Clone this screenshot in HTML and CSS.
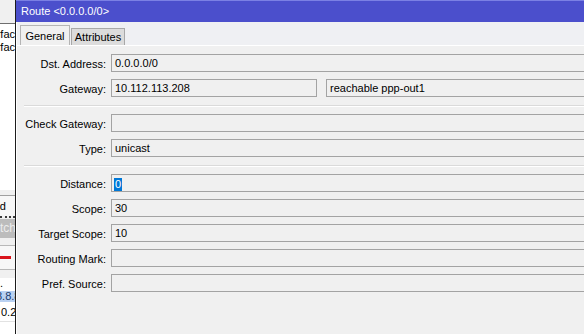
FILE: index.html
```html
<!DOCTYPE html>
<html>
<head>
<meta charset="utf-8">
<link rel="stylesheet" href="styles.css">
</head>
<body>
<div class="screen">
  <div class="bg-win">
    <div class="bw-top"></div>
    <div class="bw-list">
      <div class="bw-clip">Interfac</div>
      <div class="bw-clip">Interfac</div>
    </div>
    <div class="bw-gap"></div>
    <div class="bw-find"><span class="bw-clip bw-find-text">Find</span></div>
    <div class="bw-dash"></div>
    <div class="bw-graybtn">tch</div>
    <div class="bw-gap2"></div>
    <div class="bw-btn"><span class="bw-minus"></span></div>
    <div class="bw-gap3"></div>
    <div class="bw-head">.</div>
    <div class="bw-sel">8.8.8</div>
    <div class="bw-row">0.2</div>
    <div class="bw-rest"></div>
  </div>
  <div class="dialog">
    <div class="titlebar">Route &lt;0.0.0.0/0&gt;</div>
    <div class="tabs">
      <div class="tab active">General</div>
      <div class="tab">Attributes</div>
    </div>
    <div class="panel">
      <div class="row">
        <div class="label">Dst. Address:</div>
        <div class="field">0.0.0.0/0</div>
      </div>
      <div class="row">
        <div class="label">Gateway:</div>
        <div class="field gw">10.112.113.208</div>
        <div class="field">reachable ppp-out1</div>
      </div>
      <div class="sep"></div>
      <div class="row">
        <div class="label">Check Gateway:</div>
        <div class="field"></div>
      </div>
      <div class="row">
        <div class="label">Type:</div>
        <div class="field">unicast</div>
      </div>
      <div class="sep"></div>
      <div class="row">
        <div class="label">Distance:</div>
        <div class="field"><span class="selected">0</span></div>
      </div>
      <div class="row">
        <div class="label">Scope:</div>
        <div class="field">30</div>
      </div>
      <div class="row">
        <div class="label">Target Scope:</div>
        <div class="field">10</div>
      </div>
      <div class="row">
        <div class="label">Routing Mark:</div>
        <div class="field"></div>
      </div>
      <div class="row">
        <div class="label">Pref. Source:</div>
        <div class="field"></div>
      </div>
    </div>
  </div>
</div>
</body>
</html>
```

FILE: styles.css
```css
html, body {
  margin: 0;
  padding: 0;
}
body {
  width: 584px;
  height: 334px;
  overflow: hidden;
  font-family: "Liberation Sans", Arial, sans-serif;
  font-size: 11px;
  color: #000;
  background: #f0f0f0;
}
.screen {
  display: flex;
  height: 334px;
}

/* background window on the left */
.bg-win {
  width: 15px;
  flex: none;
  display: flex;
  flex-direction: column;
  overflow: hidden;
  background: #fff;
}
.bw-top {
  height: 23px;
  flex: none;
  background: #f0f0f0;
  border-bottom: 1px solid #6e6e6e;
}
.bw-list {
  height: 166px;
  flex: none;
  padding-top: 4px;
  box-sizing: border-box;
  background: #fff;
}
.bw-clip {
  display: flex;
  justify-content: flex-end;
  white-space: nowrap;
  overflow: hidden;
  line-height: 13px;
}
.bw-gap {
  height: 5px;
  flex: none;
  background: #f0f0f0;
  border-bottom: 1px solid #a0a0a0;
}
.bw-find {
  height: 20px;
  flex: none;
  background: #f7f7f7;
  display: flex;
  justify-content: flex-end;
  overflow: hidden;
}
.bw-find-text {
  line-height: 18px;
  padding-top: 1px;
  padding-right: 9px;
}
.bw-dash {
  height: 3px;
  flex: none;
  background: #f0f0f0;
  border-top: 2px dotted #3a3a3a;
  box-sizing: border-box;
}
.bw-graybtn {
  height: 19px;
  flex: none;
  background: #bcbcbc;
  color: #ececec;
  font-size: 12px;
  line-height: 19px;
  white-space: nowrap;
  overflow: hidden;
}
.bw-gap2 {
  height: 7px;
  flex: none;
  background: #f0f0f0;
}
.bw-btn {
  height: 23px;
  flex: none;
  background: #f7f7f7;
  border-top: 1px solid #b8b8b8;
  border-bottom: 1px solid #b8b8b8;
  display: flex;
  align-items: center;
}
.bw-minus {
  width: 11px;
  height: 3px;
  background: #d9141c;
}
.bw-gap3 {
  height: 8px;
  flex: none;
  background: #f0f0f0;
}
.bw-head {
  height: 12px;
  flex: none;
  background: #fff;
  line-height: 10px;
  border-bottom: 1px solid #fff;
}
.bw-sel {
  height: 11px;
  flex: none;
  background: #b9d1f2;
  color: #1a3a6a;
  line-height: 11px;
  white-space: nowrap;
  overflow: hidden;
  text-indent: -4px;
}
.bw-row {
  height: 19px;
  flex: none;
  line-height: 20px;
  padding-left: 1px;
  white-space: nowrap;
  overflow: hidden;
  border-bottom: 1px solid #e2e2e2;
}
.bw-rest {
  flex: 1;
  background: #fff;
}

/* dialog */
.dialog {
  flex: 1;
  min-width: 0;
  display: flex;
  flex-direction: column;
  border-left: 1px solid #1c1c1c;
  background: #f0f0f0;
  overflow: hidden;
}
.titlebar {
  height: 22px;
  flex: none;
  box-sizing: border-box;
  background: #4b4fcc;
  border-top: 1px solid #7b80e4;
  color: #fff;
  padding-left: 5px;
  line-height: 20px;
  white-space: nowrap;
}
.tabs {
  height: 23px;
  flex: none;
  display: flex;
  align-items: flex-end;
  padding-left: 3px;
  border-left: 1px solid #fff;
  background: #eff0f3;
}
.tab {
  height: 17px;
  width: 54px;
  box-sizing: border-box;
  border: 1px solid #a8a8a8;
  border-bottom: none;
  background: #dcdcdc;
  text-align: center;
  line-height: 17px;
  margin-left: 1px;
}
.tab.active {
  height: 20px;
  width: 50px;
  margin-left: 0;
  background: #f0f0f0;
  border-color: #b4b4b4;
  line-height: 21px;
}
.panel {
  flex: 1;
  border-top: 1px solid #fff;
  border-left: 1px solid #fff;
  padding-top: 8px;
  padding-left: 7px;
  display: flex;
  flex-direction: column;
  gap: 7px;
}
.row {
  display: flex;
  height: 18px;
  gap: 5px;
}
.label {
  width: 82px;
  flex: none;
  text-align: right;
  line-height: 18px;
  padding-top: 1px;
  box-sizing: border-box;
  white-space: nowrap;
}
.field {
  flex: 1;
  height: 18px;
  box-sizing: border-box;
  border: 1px solid #a3a3a3;
  background: #f0f0f0;
  padding-left: 3px;
  line-height: 17px;
  white-space: nowrap;
  margin-right: -6px;
}
.field.gw {
  flex: none;
  width: 206px;
  margin-right: 4px;
}
.selected {
  display: inline-block;
  background: #0078d7;
  color: #fff;
  line-height: 13px;
  padding: 0 1px;
  margin-left: -1px;
  vertical-align: -1px;
}
.sep {
  height: 3px;
  flex: none;
  box-sizing: border-box;
  border-top: 1px solid #f0f0f0;
  border-bottom: 1px solid #fff;
  background: #dadada;
}
```
